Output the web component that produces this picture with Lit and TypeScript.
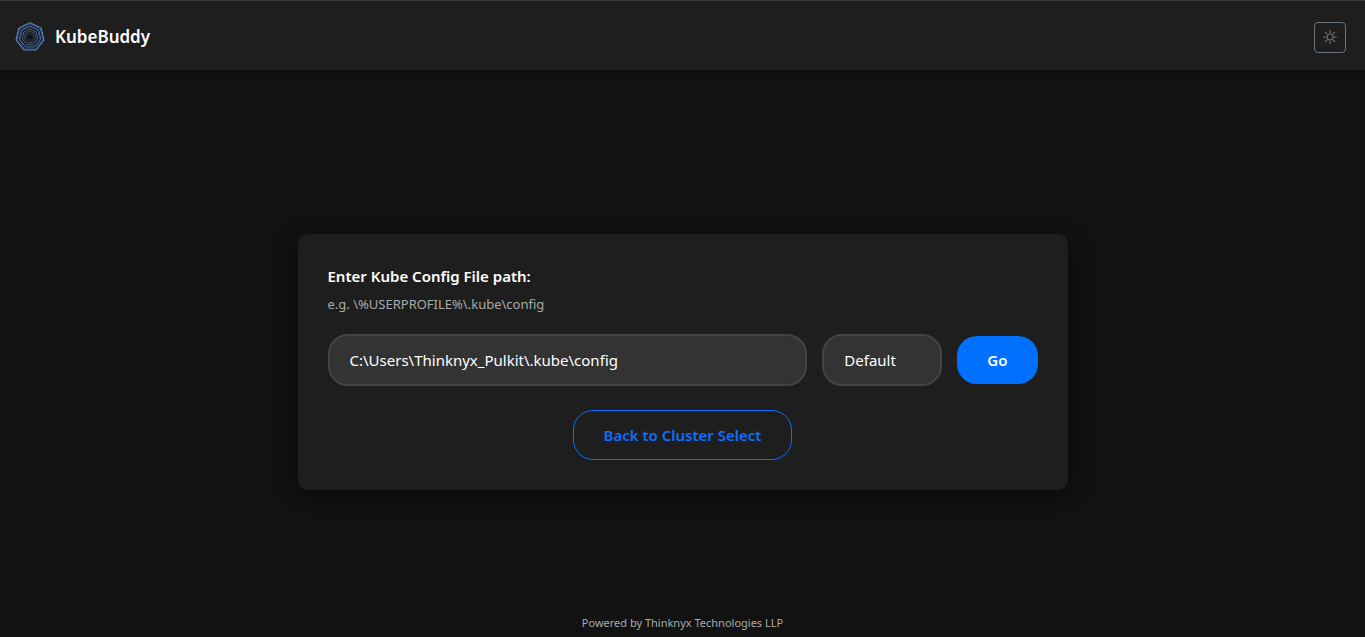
import { LitElement, html, svg, css } from "lit";
import { customElement, state } from "lit/decorators.js";

/** Points of a regular heptagon with one corner at the top. */
function heptagon(radius: number): string {
  return Array.from({ length: 7 }, (_, i) => {
    const angle = (i * 2 * Math.PI) / 7 - Math.PI / 2;
    return `${(15 + radius * Math.cos(angle)).toFixed(2)},${(15 + radius * Math.sin(angle)).toFixed(2)}`;
  }).join(" ");
}

const RINGS = [
  { r: 14.3, color: "#8fabd4", width: 0.9 },
  { r: 13.3, color: "#2a5aa6", width: 1.2 },
  { r: 11, color: "#7288aa", width: 0.9 },
  { r: 10.1, color: "#27497f", width: 0.9 },
  { r: 8, color: "#55657e", width: 1 },
  { r: 6.1, color: "#455368", width: 0.9 },
  { r: 4.4, color: "#364254", width: 0.8 },
  { r: 2.8, color: "#2b3442", width: 0.7 },
];

@customElement("app-root")
export class AppRoot extends LitElement {
  static styles = css`
    :host {
      display: flex;
      flex-direction: column;
      min-height: 100vh;
      box-sizing: border-box;
      background: #121212;
      color: #ffffff;
      font-family: "Segoe UI", "Noto Sans", "Open Sans", sans-serif;
      font-size: 15px;
      line-height: 24px;
    }
    *,
    *::before,
    *::after {
      box-sizing: border-box;
    }
    .header {
      display: flex;
      align-items: center;
      justify-content: space-between;
      height: 70px;
      padding: 3px 19px 0 15px;
      border-top: 1px solid #38383c;
      background: #1e1e1e;
      box-shadow: 0 2px 4px rgba(0, 0, 0, 0.3);
    }
    .brand {
      display: flex;
      align-items: center;
      gap: 10px;
      height: 32px;
      color: #ffffff;
      font-size: 17px;
      font-weight: 600;
      text-decoration: none;
    }
    .logo {
      display: block;
      width: 30px;
      height: 30px;
    }
    .theme {
      display: grid;
      place-items: center;
      width: 32px;
      height: 31px;
      padding: 0;
      border: 1px solid #6c757d;
      border-radius: 4px;
      background: transparent;
      color: #6c757d;
      cursor: pointer;
    }
    .main {
      flex: 1;
      display: flex;
      align-items: center;
      justify-content: center;
      padding: 44px 16px 0;
    }
    .card {
      width: 100%;
      max-width: 770px;
      padding: 30px;
      border-radius: 10px;
      background: #1e1e1e;
      box-shadow: 0 4px 20px rgba(0, 0, 0, 0.5);
    }
    .label {
      display: block;
      font-weight: 600;
    }
    .hint {
      margin: 6px 0 20px;
      color: #aaaaaa;
      font-size: 13px;
      line-height: 20px;
    }
    .row {
      display: flex;
      align-items: center;
      gap: 15px;
    }
    .field {
      height: 52px;
      border: 2px solid #444444;
      border-radius: 20px;
      background-color: #333333;
      color: #ffffff;
      font: inherit;
      outline: none;
    }
    .path {
      flex: 1;
      min-width: 0;
      padding: 0 20px;
    }
    .picker {
      display: grid;
      align-items: center;
      width: 120px;
    }
    .picker > * {
      grid-area: 1 / 1;
    }
    .select {
      width: 100%;
      padding: 0 36px 0 20px;
      appearance: none;
    }
    .chevron {
      justify-self: end;
      margin-right: 16px;
      pointer-events: none;
    }
    .go,
    .back {
      padding: 0 30px;
      border-radius: 20px;
      font: inherit;
      font-weight: 600;
      cursor: pointer;
    }
    .go {
      height: 48px;
      border: 0;
      background: #0070ff;
      color: #ffffff;
    }
    .actions {
      display: flex;
      justify-content: center;
      margin-top: 24px;
    }
    .back {
      height: 50px;
      border: 1px solid #0d6efd;
      background: transparent;
      color: #0d6efd;
    }
    .footer {
      padding: 4px 16px;
      color: #aaaaaa;
      font-size: 11px;
      line-height: 20px;
      text-align: center;
    }
  `;

  @state() private path = "C:\\Users\\Thinknyx_Pulkit\\.kube\\config";

  private onPath(event: Event) {
    this.path = (event.target as HTMLInputElement).value;
  }

  render() {
    return html`
      <header class="header">
        <a class="brand" href="#">
          <svg class="logo" viewBox="0 0 30 30" fill="none" aria-hidden="true">
            <polygon points=${heptagon(14)} fill="#101318"></polygon>
            ${RINGS.map(
              (ring) => svg`<polygon points=${heptagon(ring.r)} stroke=${ring.color} stroke-width=${ring.width}></polygon>`
            )}
          </svg>
          <span>KubeBuddy</span>
        </a>
        <button class="theme" type="button" aria-label="Toggle theme">
          <svg width="14" height="14" viewBox="0 0 14 14" fill="none" stroke="currentColor" stroke-linecap="round" aria-hidden="true">
            <circle cx="7" cy="7" r="3" stroke-width="1.1"></circle>
            <path stroke-width="1.2" d="M7 .6v1.9M7 11.5v1.9M.6 7h1.9M11.5 7h1.9M2.4 2.4l1.3 1.3M10.3 10.3l1.3 1.3M2.4 11.6l1.3-1.3M10.3 3.7l1.3-1.3"></path>
          </svg>
        </button>
      </header>
      <main class="main">
        <form class="card" @submit=${(e: Event) => e.preventDefault()}>
          <label class="label" for="path">Enter Kube Config File path:</label>
          <p class="hint" id="hint">e.g. \\%USERPROFILE%\\.kube\\config</p>
          <div class="row">
            <input class="field path" id="path" type="text" spellcheck="false" aria-describedby="hint" .value=${this.path} @input=${this.onPath} />
            <div class="picker">
              <select class="field select" aria-label="Context">
                <option>Default</option>
              </select>
              <svg class="chevron" width="12" height="12" viewBox="0 0 16 16" fill="none" stroke="#343a40" stroke-width="2" stroke-linecap="round" stroke-linejoin="round" aria-hidden="true">
                <path d="m2 5 6 6 6-6"></path>
              </svg>
            </div>
            <button class="go" type="submit">Go</button>
          </div>
          <div class="actions">
            <button class="back" type="button">Back to Cluster Select</button>
          </div>
        </form>
      </main>
      <footer class="footer">Powered by Thinknyx Technologies LLP</footer>
    `;
  }
}
